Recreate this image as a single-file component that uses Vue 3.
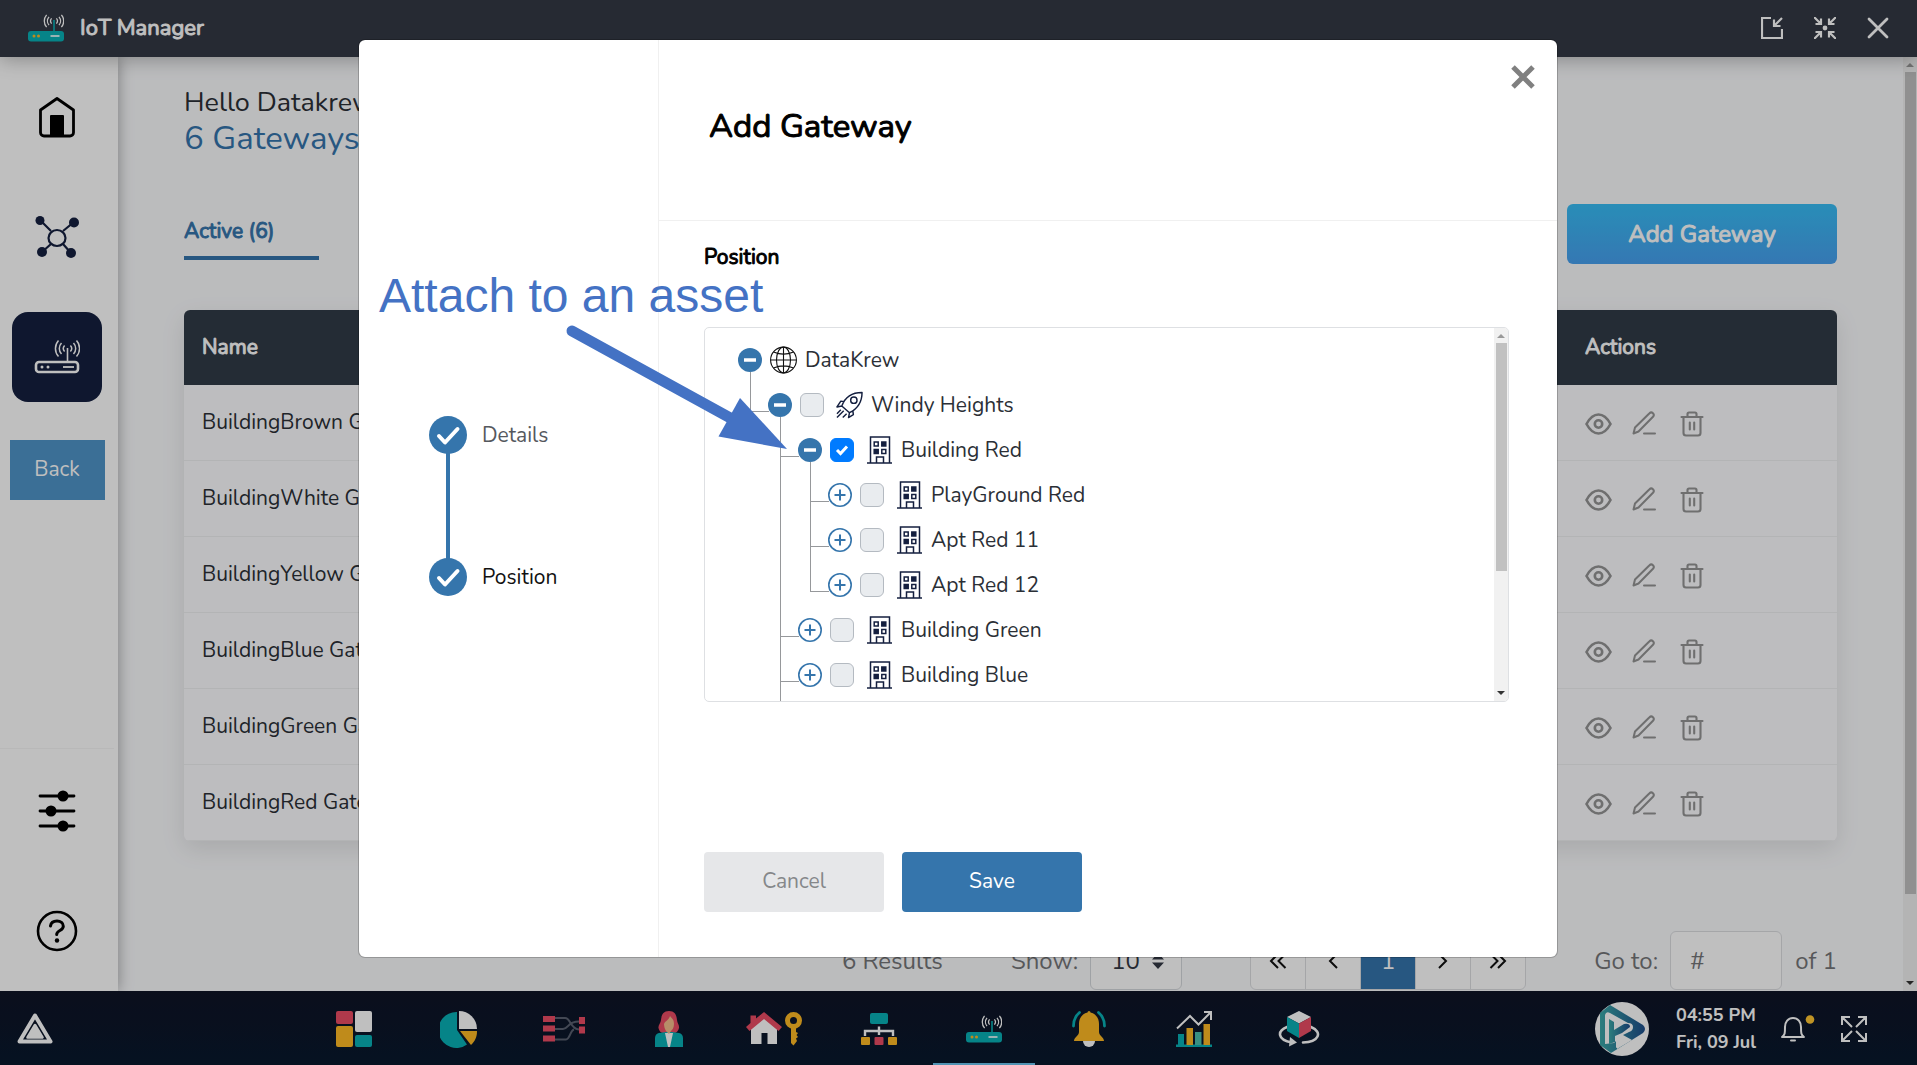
<script setup>
import { ref } from 'vue'

const gateways = [
  'BuildingBrown Gateway',
  'BuildingWhite Gateway',
  'BuildingYellow Gateway',
  'BuildingBlue Gateway',
  'BuildingGreen Gateway',
  'BuildingRed Gateway',
]

const tree = ref([
  { id: 'root', label: 'DataKrew', level: 0, icon: 'globe', open: true },
  { id: 'windy', label: 'Windy Heights', level: 1, icon: 'rocket', open: true },
  { id: 'red', label: 'Building Red', level: 2, icon: 'building', open: true, checked: true },
  { id: 'play', label: 'PlayGround Red', level: 3, icon: 'building' },
  { id: 'r11', label: 'Apt Red 11', level: 3, icon: 'building' },
  { id: 'r12', label: 'Apt Red 12', level: 3, icon: 'building', last: true },
  { id: 'green', label: 'Building Green', level: 2, icon: 'building' },
  { id: 'blue', label: 'Building Blue', level: 2, icon: 'building' },
])

const steps = ['Details', 'Position']
const apps = ['Dashboard', 'Reports', 'Flows', 'Users', 'Properties', 'Assets', 'IoT Manager', 'Alerts', 'Analytics', 'Digital Twin']
const pageSize = ref('10')
</script>

<template>
  <div class="app">
    <header class="titlebar">
      <svg class="brand" viewBox="0 0 36 28" aria-hidden="true">
        <path d="M23.600 4.400a4 4 0 0 0 0 5.200M28.400 4.400a4 4 0 0 1 0 5.200M21 2.800a6.500 6.500 0 0 0 0 8.400M31 2.800a6.500 6.500 0 0 1 0 8.400M18.600.8a9.500 9.500 0 0 0 0 12.400M33.400.8a9.500 9.500 0 0 1 0 12.400" fill="none" stroke="#fff" stroke-width="1.300" />
        <path d="M26 6v12" stroke="#09b0b6" stroke-width="1.600" />
        <rect y="17" width="36" height="10.500" rx="3" fill="#09b0b6" />
        <circle cx="6" cy="22" r="1.500" fill="#ffba25" /><circle cx="10.500" cy="22" r="1.500" fill="#ffba25" />
        <path d="M22.500 22h9" stroke="#fff" stroke-width="1.600" />
      </svg>
      <h1 class="strong">IoT Manager</h1>
      <div class="window-tools">
        <button type="button" aria-label="Minimize">
          <svg viewBox="0 0 22 22" fill="none" stroke="#fff" stroke-width="2.200"><path d="M10 1H1v20h20v-9M21 1l-8 8M13 2.500v6.500h6.500" /></svg>
        </button>
        <button type="button" aria-label="Restore">
          <svg viewBox="0 0 22 22" fill="none" stroke="#fff" stroke-width="2.200"><path d="M0 0l7 7M7 1.500V7H1.500M22 0l-7 7M15 1.500V7h5.500M0 22l7-7M7 20.500V15H1.500M22 22l-7-7M15 20.500V15h5.500" /><circle cx="11" cy="11" r="1.300" fill="#fff" /></svg>
        </button>
        <button type="button" aria-label="Close window">
          <svg viewBox="0 0 22 22" fill="none" stroke="#fff" stroke-width="2.800" stroke-linecap="round"><path d="M2 2l18 18M20 2L2 20" /></svg>
        </button>
      </div>
    </header>

    <div class="workspace">
      <nav class="sidebar" aria-label="Main">
        <a class="tile" href="#home" aria-label="Home">
          <svg width="40" height="42" viewBox="0 0 40 42"><path d="M20 2.500L36.500 14v22.500a3.500 3.500 0 0 1-3.500 3.500H7a3.500 3.500 0 0 1-3.500-3.500V14z" fill="none" stroke="#000" stroke-width="2.800" stroke-linejoin="round" /><path d="M13 20a1 1 0 0 1 1-1h12a1 1 0 0 1 1 1v20H13z" /></svg>
        </a>
        <a class="tile" href="#nodes" aria-label="Devices">
          <svg width="44" height="42" viewBox="0 0 44 42" fill="#141f3f"><path d="M5 4l11 11M39 6L28 15M7 36l9-8M36 37l-8-9" stroke="#141f3f" stroke-width="2.200" /><ellipse cx="22" cy="22" rx="8.500" ry="8" fill="none" stroke="#141f3f" stroke-width="2.200" /><circle cx="5" cy="4.500" r="4.500" /><circle cx="39" cy="6.500" r="5" /><circle cx="7" cy="36" r="5" /><circle cx="36" cy="37" r="5" /></svg>
        </a>
        <a class="tile active" href="#gateways" aria-label="Gateways">
          <svg width="46" height="36" viewBox="0 0 46 36" fill="none" stroke="#fff"><path d="M30.600 6.500a4.500 4.500 0 0 0 0 6M36.400 6.500a4.500 4.500 0 0 1 0 6M27.500 4a8 8 0 0 0 0 11M39.500 4a8 8 0 0 1 0 11M24.500 1.500a12 12 0 0 0 0 16M42.500 1.500a12 12 0 0 1 0 16" stroke-width="1.500" /><path d="M33.500 9v13" stroke-width="1.600" /><rect x="2" y="23" width="42" height="10" rx="3" stroke-width="2.600" /><path d="M29 28h11" stroke-width="1.800" /><circle cx="8" cy="28" r="1.500" fill="#fff" stroke="none" /><circle cx="14" cy="28" r="1.500" fill="#fff" stroke="none" /></svg>
        </a>
        <button type="button" class="back">Back</button>
        <div class="lower">
          <a class="tile" href="#settings" aria-label="Settings">
            <svg width="38" height="42" viewBox="0 0 38 42"><path d="M2 6h34M2 21h34M2 36h34" stroke="#000" stroke-width="2.800" stroke-linecap="round" /><circle cx="25" cy="6" r="5.500" /><circle cx="13" cy="21" r="5.500" /><circle cx="25" cy="36" r="5.500" /></svg>
          </a>
          <a class="tile" href="#help" aria-label="Help">
            <svg width="42" height="42" viewBox="0 0 42 42" fill="none" stroke="#000" stroke-width="2.600"><circle cx="21" cy="21" r="19" /><path d="M14.500 16c.5-3.500 3.200-5 6.500-5 3.600 0 6.300 2 6.300 5.200 0 4.800-6.600 3.800-6.600 8.200" stroke-linecap="round" stroke-width="3" /><circle cx="21" cy="30.500" r="2.200" fill="#000" stroke="none" /></svg>
          </a>
        </div>
      </nav>

      <main class="content">
        <p class="hello">Hello Datakrew</p>
        <p class="count">6 Gateways</p>
        <div class="tabs">
          <a class="tab strong" href="#active">Active (6)</a>
          <button type="button" class="add strong">Add Gateway</button>
        </div>
        <table class="grid">
          <thead>
            <tr><th scope="col" class="strong">Name</th><th scope="col" class="acts strong">Actions</th></tr>
          </thead>
          <tbody>
            <tr v-for="name in gateways" :key="name">
              <td>{{ name }}</td>
              <td class="acts">
                <div class="row-tools">
                  <button type="button" :aria-label="'View ' + name"><svg width="27" height="26" viewBox="0 0 27 26" fill="none" stroke="#949495" stroke-width="2.600"><path d="M1.500 13C5 6.500 9 3.500 13.500 3.500S22 6.500 25.500 13C22 19.500 18 22.500 13.500 22.500S5 19.500 1.500 13z" /><circle cx="13.500" cy="13" r="3.700" /></svg></button>
                  <button type="button" :aria-label="'Edit ' + name"><svg width="24" height="26" viewBox="0 0 24 26" fill="none" stroke="#949495" stroke-width="2" stroke-linecap="round" stroke-linejoin="round"><path d="M1.500 22.500l1.500-6L17.500 2.300a2.400 2.400 0 0 1 3.500 3.400L6.500 20.500zM12 22.500h11" /></svg></button>
                  <button type="button" :aria-label="'Delete ' + name"><svg width="24" height="26" viewBox="0 0 24 26" fill="none" stroke="#949495" stroke-width="2.100" stroke-linecap="round"><path d="M1.500 6h21M7.500 5.500V3a1.500 1.500 0 0 1 1.500-1.500h6A1.500 1.500 0 0 1 16.500 3v2.500M3.500 6.500V22a2.500 2.500 0 0 0 2.500 2.500h12a2.500 2.500 0 0 0 2.500-2.500V6.500M9.800 11.500v7M14.200 11.500v7" /></svg></button>
                </div>
              </td>
            </tr>
          </tbody>
        </table>
        <div class="pager">
          <span>6 Results</span>
          <label class="show" for="page-size">Show:</label>
          <div class="select">
            <select id="page-size" v-model="pageSize"><option>10</option></select>
            <svg width="12" height="16" viewBox="0 0 12 16" aria-hidden="true"><path d="M6 0l6 6.500H0zM6 16l6-6.500H0z" fill="#333844" /></svg>
          </div>
          <div class="pages">
            <button type="button" aria-label="First page"><svg width="18" height="16" viewBox="0 0 18 16"><path d="M9 1L2 8l7 7M16.500 1l-7 7 7 7" /></svg></button>
            <button type="button" aria-label="Previous page"><svg width="10" height="16" viewBox="0 0 10 16"><path d="M9 1L2 8l7 7" /></svg></button>
            <button type="button" class="current">1</button>
            <button type="button" aria-label="Next page"><svg width="10" height="16" viewBox="0 0 10 16"><path d="M1 1l7 7-7 7" /></svg></button>
            <button type="button" aria-label="Last page"><svg width="18" height="16" viewBox="0 0 18 16"><path d="M1.500 1l7 7-7 7M9 1l7 7-7 7" /></svg></button>
          </div>
          <label class="goto" for="goto">Go to:</label>
          <input id="goto" type="text" placeholder="#" />
          <span>of 1</span>
        </div>
      </main>
      <div class="scroll page-scroll" aria-hidden="true"><i class="up"></i><b></b><i class="down"></i></div>
    </div>

    <footer class="taskbar">
      <button type="button" class="start" aria-label="Start">
        <svg width="36" height="31" viewBox="0 0 36 31" fill="none" stroke="#fff" stroke-linejoin="round"><path d="M18 2.500L33.500 28.500h-31z" stroke-width="4" /><path d="M18 12l7.500 12.500h-15z" stroke-width="2.600" fill="#fff" /></svg>
      </button>
      <nav class="apps" aria-label="Applications">
        <a v-for="(app, i) in apps" :key="app" :class="{ on: i === 6 }" :href="'#app-' + i" :aria-label="app">
          <svg v-if="i === 0" width="36" height="38" viewBox="0 0 36 38"><rect width="17" height="13" y="1" rx="2" fill="#eb4c64" /><rect x="19" y="1" width="17" height="21" rx="2" fill="#fff" /><rect y="16" width="17" height="21" rx="2" fill="#ffba25" /><rect x="19" y="25" width="17" height="12" rx="2" fill="#09b0b6" /></svg>
          <svg v-else-if="i === 1" width="38" height="38" viewBox="0 0 38 38"><path d="M17 2v18l10 14.500A18 18 0 1 1 17 2z" fill="#09b0b6" /><path d="M19 1a18 18 0 0 1 18 18H19z" fill="#fff" /><path d="M20 21h17c0 6-2 10-6 14z" fill="#ffba25" /></svg>
          <svg v-else-if="i === 2" width="42" height="28" viewBox="0 0 42 28"><path d="M12 3h10c6 0 5 11 14 11.500M12 14h8c6 0 4-7.500 16-7.500M12 24.500h11c4 0 4-9 8-10" fill="none" stroke="#5a6070" stroke-width="2" /><path d="M0 1h12v6H0zM0 10.500h12v6H0zM0 20.500h12v6H0zM36 2h6v7h-6zM36 11.500h6v7h-6z" fill="#eb4c64" /></svg>
          <svg v-else-if="i === 3" width="28" height="38" viewBox="0 0 28 38"><path d="M14 1c6 0 7.500 4 8 9 .2 3 2.500 5 2 8s-3 5-5 5H9c-3 0-5-2-5.500-5S5.800 13 6 10c.5-5 2-9 8-9z" fill="#eb4c64" /><path d="M0 37V28c0-3 2-4.500 4-5l7-1h6l7 1c2 .5 4 2 4 5v9z" fill="#09b0b6" /><path d="M10 23h8l-3 14h-2z" fill="#fff" /><path d="M15 6c2 3 4 3 4 8 0 4-2 6-3 7l-2 3-3-3c-1-2-2-4-2-7 1-3 5-4 6-8z" fill="#f4bd8b" /></svg>
          <svg v-else-if="i === 4" width="56" height="36" viewBox="0 0 56 36"><path d="M5 17L18 6l13 11v16h-9.500V22h-6v11H5z" fill="#fff" /><path d="M18 1l18 15-3.500 4L18 8 3.500 20 0 16l4.500-4V4.500H10V7.500z" fill="#eb4c64" /><circle cx="47.500" cy="9.500" r="6" fill="none" stroke="#ffba25" stroke-width="5" /><path d="M45 17h5v4l2 1-1.500 2 1.500 2-2 1.500 1 2.500-3.500 4.500L45 32z" fill="#ffba25" /></svg>
          <svg v-else-if="i === 5" width="36" height="34" viewBox="0 0 36 34"><rect x="9" y="1" width="18" height="11" rx="2" fill="#09b0b6" /><path d="M4 24v-5h28v5M18 14.500V23" fill="none" stroke="#fff" stroke-width="2.400" /><rect y="25" width="9" height="8" rx="1" fill="#ffba25" /><rect x="13.500" y="25" width="9" height="8" rx="1" fill="#eb4c64" /><rect x="27" y="25" width="9" height="8" rx="1" fill="#ffba25" /></svg>
          <svg v-else-if="i === 6" width="36" height="28" viewBox="0 0 36 28"><path d="M23.600 4.400a4 4 0 0 0 0 5.200M28.400 4.400a4 4 0 0 1 0 5.200M21 2.800a6.500 6.500 0 0 0 0 8.400M31 2.800a6.500 6.500 0 0 1 0 8.400M18.600.8a9.500 9.500 0 0 0 0 12.400M33.400.8a9.500 9.500 0 0 1 0 12.400" fill="none" stroke="#fff" stroke-width="1.300" /><path d="M26 6v12" stroke="#09b0b6" stroke-width="1.600" /><rect y="17" width="36" height="10.500" rx="3" fill="#09b0b6" /><circle cx="6" cy="22" r="1.500" fill="#ffba25" /><circle cx="10.500" cy="22" r="1.500" fill="#ffba25" /><path d="M22.500 22h9" stroke="#fff" stroke-width="1.600" /></svg>
          <svg v-else-if="i === 7" width="34" height="38" viewBox="0 0 34 38"><circle cx="17" cy="31" r="6" fill="#fff" /><path d="M15.500 2.500a1.500 1.500 0 0 1 3 0C24 4 27 8 27 14v8c0 4 5 5 5 9H2c0-4 5-5 5-9v-8c0-6 3-10 8.500-11.500z" fill="#ffba25" /><path d="M7.500 2.500C3.500 6 1.500 10 1.500 16M26.500 2.500C30.500 6 32.500 10 32.500 16" fill="none" stroke="#09b0b6" stroke-width="2.800" stroke-linecap="round" /></svg>
          <svg v-else-if="i === 8" width="36" height="38" viewBox="0 0 36 38"><path d="M2 24h6v11H2zM0 34.500h36V37H0z" fill="#09b0b6" /><path d="M10.500 18H17v17h-6.500zM27.500 14H34v21h-6.500z" fill="#ffba25" /><path d="M19 22h6.500v13H19z" fill="#4cbfae" /><path d="M1 18.500L14 6l8.500 8.500L34 3M28 2h7v8" fill="none" stroke="#fff" stroke-width="2" /></svg>
          <svg v-else width="42" height="38" viewBox="0 0 42 38"><path d="M9 17c-10 4-10 13 5 15.500M33 17c12 5 8 15-8 15.500" fill="none" stroke="#fff" stroke-width="2.600" stroke-linecap="round" /><path d="M12 27l7 5.500-8 4z" fill="#fff" /><path d="M21 1l12 6-12 6.500L9 7z" fill="#fff" /><path d="M9 7l12 6.500V28L9 21z" fill="#09b0b6" /><path d="M33 7l-12 6.500V28l12-7z" fill="#eb4c64" /></svg>
        </a>
      </nav>
      <div class="tray">
        <svg class="logo" width="54" height="54" viewBox="0 0 54 54" aria-hidden="true"><defs><linearGradient id="krew"><stop offset="0" stop-color="#3ba8a8" /><stop offset="1" stop-color="#1f4f8c" /></linearGradient></defs><circle cx="27" cy="27" r="27" fill="#fff" /><path d="M15 3L48 23q4 4 0 8L16 51 5 43V11z" fill="url(#krew)" /><path d="M10 42V13q1-4 5-2l18 10q5 0 5 4t-4 5l-6 3 9 5-15 9v-9l-3 3z" fill="#fff" /><path d="M14 42V17l5 3v8l10-6q6-1 6 3l-8 6-7 3v6z" fill="url(#krew)" /><path d="M21 35l10 6-10 5z" fill="#fff" /></svg>
        <div class="clock"><span>04:55 PM</span><span>Fri, 09 Jul</span></div>
        <button type="button" class="bell" aria-label="Notifications"><svg width="36" height="28" viewBox="0 0 36 28"><path d="M1 22c3-2 3-4 3-10 0-5 3-9 8-9s8 4 8 9c0 6 0 8 3 10zM10 25.500h4" fill="none" stroke="#fff" stroke-width="2" stroke-linejoin="round" stroke-linecap="round" /><circle cx="29" cy="4.500" r="4.300" fill="#ffc632" /></svg></button>
        <button type="button" aria-label="Full screen"><svg width="26" height="26" viewBox="0 0 26 26" fill="none" stroke="#fff" stroke-width="2"><path d="M1 9V1h8M1 1l10 10M17 1h8v8M25 1L15 11M1 17v8h8M1 25l10-10M25 17v8h-8M25 25L15 15" /></svg></button>
      </div>
    </footer>

    <div class="backdrop">
      <section class="modal" role="dialog" aria-modal="true" aria-labelledby="dlg-title">
        <aside class="progress">
          <ol>
            <li v-for="(step, i) in steps" :key="step" :class="{ now: i === 1 }">
              <svg width="38" height="38" viewBox="0 0 38 38" aria-hidden="true"><circle cx="19" cy="19" r="19" fill="#3575ac" /><path d="M10 20l6 6.500L28.500 13" fill="none" stroke="#fff" stroke-width="4" stroke-linecap="round" stroke-linejoin="round" /></svg>
              <span>{{ step }}</span>
            </li>
          </ol>
        </aside>
        <div class="pane">
          <div class="pane-head">
            <h2 id="dlg-title" class="strong">Add Gateway</h2>
            <button type="button" class="close" aria-label="Close"><svg width="24" height="24" viewBox="0 0 24 24"><path d="M2 2l20 20M22 2L2 22" stroke="#808080" stroke-width="5" /></svg></button>
          </div>
          <form class="pane-body" @submit.prevent>
            <h3 class="strong">Position</h3>
            <div class="tree-box">
              <ul class="tree">
                <li v-for="n in tree" :key="n.id" :class="['level-' + n.level, { last: n.last }]">
                  <button type="button" class="toggle" :aria-expanded="!!n.open" :aria-label="'Toggle ' + n.label">
                    <svg width="24" height="24" viewBox="0 0 24 24">
                      <template v-if="n.open"><circle cx="12" cy="12" r="12" fill="#3575ac" /><path d="M6 12h12" stroke="#fff" stroke-width="3.600" /></template>
                      <template v-else><circle cx="12" cy="12" r="11.200" fill="#fff" stroke="#3575ac" stroke-width="1.600" /><path d="M6.500 12h11M12 6.500v11" stroke="#3575ac" stroke-width="2" /></template>
                    </svg>
                  </button>
                  <input v-if="n.level" :id="n.id" v-model="n.checked" type="checkbox" />
                  <label :for="n.level ? n.id : undefined">
                    <svg v-if="n.icon === 'globe'" width="27" height="28" viewBox="0 0 27 28" fill="none" stroke="#111" stroke-width="1.100"><circle cx="13.500" cy="14" r="12.900" /><ellipse cx="13.500" cy="14" rx="7" ry="12.900" /><path d="M.6 14h25.800M13.500 1v26M3.500 6c6 2.600 14 2.600 20 0M3.500 22c6-2.600 14-2.600 20 0" /></svg>
                    <svg v-else-if="n.icon === 'rocket'" width="27" height="28" viewBox="0 0 28 28" fill="none" stroke="#141f3f" stroke-width="1.500" stroke-linejoin="round"><path d="M6 15C9 7 16 1 27 1c0 11-5 17-13 21zM6 15l8 7M8.500 10.500L5 10l-4 6 5-1M17.500 20l.5 4-5 3 1-5M1 23l4-4M1 27l7-7M7 27l4-4" /><circle cx="18.500" cy="9" r="3.300" /></svg>
                    <svg v-else width="27" height="28" viewBox="0 0 27 28" fill="none" stroke="#141f3f" stroke-width="1.500"><path d="M4.500 27V1h19v26M1 27h25M10.500 27v-6h7v6M8.200 6h4v4h-4zM15.800 13.500h4v4h-4z" /><path d="M15.800 6h4v4h-4zM8.200 13.500h4v4h-4z" fill="#141f3f" /></svg>
                    <span>{{ n.label }}</span>
                  </label>
                </li>
              </ul>
              <div class="scroll tree-scroll" aria-hidden="true"><i class="up"></i><b></b><i class="down"></i></div>
            </div>
            <div class="buttons">
              <button type="button" class="cancel">Cancel</button>
              <button type="submit" class="save">Save</button>
            </div>
          </form>
        </div>
        <div class="note">
          <p>Attach to an asset</p>
          <svg width="228" height="130" viewBox="0 0 228 130" aria-hidden="true"><path d="M12 12L174 101" stroke="#4472c4" stroke-width="11" stroke-linecap="round" /><path d="M227 130L180 79l-21.500 38.500z" fill="#4472c4" /></svg>
        </div>
      </section>
    </div>
  </div>
</template>

<style>
body { margin: 0; }
</style>

<style scoped>
* { box-sizing: border-box; }
.app { height: 100vh; min-height: 900px; display: flex; flex-direction: column; position: relative; overflow: hidden; background: #fafbfd; color: #2b2f36; font-family: Nunito, Lato, "Open Sans", sans-serif; font-size: 21px; }
button, input, select { font: inherit; color: inherit; }
button { padding: 0; border: 0; background: none; cursor: pointer; }
svg { display: block; flex: none; }
a { text-decoration: none; color: inherit; }
h1, h2, h3, p, ol, ul { margin: 0; padding: 0; }
ol, ul { list-style: none; }
.strong { font-weight: 400; -webkit-text-stroke: 1px currentColor; }

.titlebar { flex: none; height: 57px; display: flex; align-items: center; padding: 0 28px 2px; background: #333844; color: #fff; position: relative; z-index: 2; box-shadow: 0 2px 20px rgba(0, 0, 0, .3); }
.brand { width: 36px; height: 28px; margin-right: 16px; }
h1 { font-size: 22px; line-height: 28px; }
.window-tools { display: flex; gap: 31px; margin-left: auto; }
.window-tools svg { width: 22px; height: 22px; }

.workspace { flex: 1; min-height: 0; display: flex; }
.sidebar { flex: none; width: 118px; display: flex; flex-direction: column; align-items: center; padding: 15px 4px 0 0; background: #fff; box-shadow: 0 0 14px rgba(0, 0, 0, .35); position: relative; z-index: 1; }
.tile { width: 90px; height: 90px; margin-bottom: 30px; display: flex; align-items: center; justify-content: center; border-radius: 16px; }
.tile.active { background: #141f3f; margin-bottom: 38px; }
.back { width: 95px; height: 60px; padding-bottom: 2px; background: #4f94c8; color: #fff; }
.lower { margin-top: auto; padding-top: 17px; width: 114px; display: flex; flex-direction: column; align-items: center; border-top: 1px solid #f6f6f6; }
.lower .tile:last-child { margin-bottom: 15px; }

.content { flex: 1; min-width: 0; overflow: hidden; padding: 30px 66px 0; }
.hello { font-size: 27px; line-height: 32px; }
.count { font-size: 33px; line-height: 40px; color: #3575ac; }
.tabs { display: flex; justify-content: space-between; align-items: flex-start; margin: 45px 0 46px; }
.tab { width: 135px; padding: 15px 0 13px; line-height: 24px; color: #3575ac; border-bottom: 4px solid #3575ac; }
.add { width: 270px; height: 60px; border-radius: 6px; background: linear-gradient(#37bdf5, #47a0ef); color: #fff; font-size: 24px; }
.grid { width: 100%; border-collapse: separate; border-spacing: 0; table-layout: fixed; background: #fcfdff; border-radius: 6px; overflow: hidden; box-shadow: 0 8px 24px rgba(0, 0, 0, .1); }
.grid th { height: 75px; padding: 0 18px 2px; background: #313b47; color: #fff; text-align: left; }
.grid td { height: 76px; padding: 0 18px 2px; border-bottom: 1px solid #eff0f2; }
.grid .acts { width: 270px; }
.row-tools { display: flex; align-items: center; gap: 20px; padding-top: 4px; }
.row-tools button:last-child { margin-left: 4px; }
.pager { display: flex; justify-content: flex-end; align-items: center; height: 59px; margin-top: 90px; font-size: 24px; color: #757679; }
.show { margin: 0 12px 0 68px; }
.select { display: flex; align-items: center; width: 92px; height: 59px; padding: 0 17px 0 20px; border: 1px solid #d5d8dc; border-radius: 6px; background: #fff; color: #333844; }
.select select { flex: 1; min-width: 0; appearance: none; border: 0; padding: 0; background: none; }
.pages { display: flex; width: 276px; height: 59px; margin: 0 68px; border: 1px solid #dcdee1; border-radius: 6px; background: #fff; overflow: hidden; }
.pages button { flex: 1; display: flex; align-items: center; justify-content: center; border-right: 1px solid #dcdee1; }
.pages button:last-child { border-right: 0; }
.pages .current { background: #3575ac; color: #fff; }
.pages svg { fill: none; stroke: #111; stroke-width: 2; }
#goto { width: 112px; height: 59px; margin: 0 13px 0 12px; padding: 0 19px; border: 1px solid #dcdee1; border-radius: 6px; background: #fff; }
#goto::placeholder { color: #757679; opacity: 1; }

.scroll { flex: none; width: 14px; display: flex; flex-direction: column; align-items: center; background: #f1f1f1; }
.scroll i { width: 0; height: 0; margin: 6px 0 5px; border: 4px solid transparent; border-top-width: 0; border-bottom-color: #999; }
.scroll i.down { margin: auto 0 6px; border-width: 4px 4px 0; border-top-color: #333; }
.scroll b { width: 11px; background: #c1c1c1; }
.page-scroll b { height: 88%; }
.tree-scroll b { height: 61%; }

.taskbar { flex: none; height: 74px; display: flex; align-items: center; padding: 0 50px 0 17px; background: linear-gradient(#0f1426, #08182d); color: #fff; position: relative; z-index: 2; }
.apps { display: flex; gap: 3px; align-self: stretch; margin-left: 250px; }
.apps a { width: 102px; display: flex; align-items: center; justify-content: center; padding-top: 4px; border-bottom: 2px solid transparent; }
.apps a.on { border-bottom-color: #6dc5ef; }
.tray { display: flex; align-items: center; margin-left: auto; padding-top: 2px; }
.clock { display: flex; flex-direction: column; width: 78px; margin: 0 27px; font-size: 18px; line-height: 27px; font-weight: 700; white-space: nowrap; }
.bell { margin-right: 24px; }

.backdrop { position: absolute; inset: 0; z-index: 3; display: flex; justify-content: center; padding: 39px 21px 107px 20px; background: rgba(0, 0, 0, .25); }
.modal { position: relative; display: flex; width: 100%; max-width: 1200px; background: #fff; background-clip: padding-box; border: 1px solid rgba(0, 0, 0, .2); border-radius: 7px; }
.progress { flex: none; width: 300px; display: flex; align-items: center; padding: 15px 0 0 70px; border-right: 1px solid #f0f0f0; }
.progress ol { display: flex; flex-direction: column; gap: 104px; }
.progress li { position: relative; display: flex; align-items: center; gap: 15px; color: #55585e; }
.progress li.now { color: #111; }
.progress li.now::before { content: ""; position: absolute; left: 17px; bottom: 37px; width: 4px; height: 106px; background: #3575ac; }
.pane { flex: 1; min-width: 0; display: flex; flex-direction: column; }
.pane-head { flex: none; height: 181px; display: flex; justify-content: space-between; align-items: flex-start; padding: 25px 22px 0 50px; border-bottom: 1px solid #f0f0f0; }
h2 { margin-top: 42px; font-size: 33px; line-height: 40px; color: #000; }
.pane-body { flex: 1; display: flex; flex-direction: column; padding: 24px 48px 45px 45px; }
h3 { font-size: 21px; line-height: 24px; color: #000; }
.tree-box { display: flex; height: 375px; margin-top: 58px; border: 1px solid #dee0e3; border-radius: 5px; overflow: hidden; }
.tree { flex: 1; padding: 9px 0 0 33px; }
.tree li { position: relative; display: flex; align-items: center; height: 45px; }
.tree .level-1 { margin-left: 30px; }
.tree .level-2 { margin-left: 60px; }
.tree .level-3 { margin-left: 90px; }
/* elbow from the parent's trunk to the row */
.tree li::before { position: absolute; left: -18px; top: -10px; width: 18px; height: 39px; border: solid #96989b; border-width: 0 0 1px 1px; }
.tree .level-1::before, .tree .level-2::before, .tree .level-3::before { content: ""; }
/* trunk that goes on to the next sibling */
.tree li::after { position: absolute; left: -18px; top: 29px; height: 20px; border-left: 1px solid #96989b; }
.tree .level-2::after, .tree .level-3:not(.last)::after { content: ""; }
/* trunk of the level above, beside nested rows */
.tree .level-3 .toggle::before { content: ""; position: absolute; left: -48px; top: 0; height: 45px; border-left: 1px solid #96989b; }
.toggle, .tree input { flex: none; width: 24px; height: 24px; margin: 0 8px 0 0; }
.toggle svg { position: relative; z-index: 1; }
.tree input { appearance: none; margin-right: 12px; border: 1px solid #b4bac1; border-radius: 6px; background: #e9ecef; }
.tree input:checked { border-color: #007bff; background: #007bff url("data:image/svg+xml,%3Csvg xmlns='http://www.w3.org/2000/svg' viewBox='0 0 24 24'%3E%3Cpath d='M7 12l3.500 3.500L17 8.500' fill='none' stroke='white' stroke-width='3'/%3E%3C/svg%3E") center / 24px no-repeat; }
.tree label { display: flex; align-items: center; gap: 8px; }
.buttons { display: flex; gap: 18px; margin-top: auto; }
.buttons button { width: 180px; height: 60px; padding-bottom: 2px; border-radius: 4px; }
.cancel { background: #e6e7e9; color: #85878a; }
.save { background: #3575ac; color: #fff; }
.note { position: absolute; left: 20px; top: 228px; pointer-events: none; color: #4472c4; }
.note p { font-family: "Liberation Sans", Arial, sans-serif; font-size: 48px; line-height: 56px; white-space: nowrap; }
.note svg { margin: -5px 0 0 181px; }
</style>
